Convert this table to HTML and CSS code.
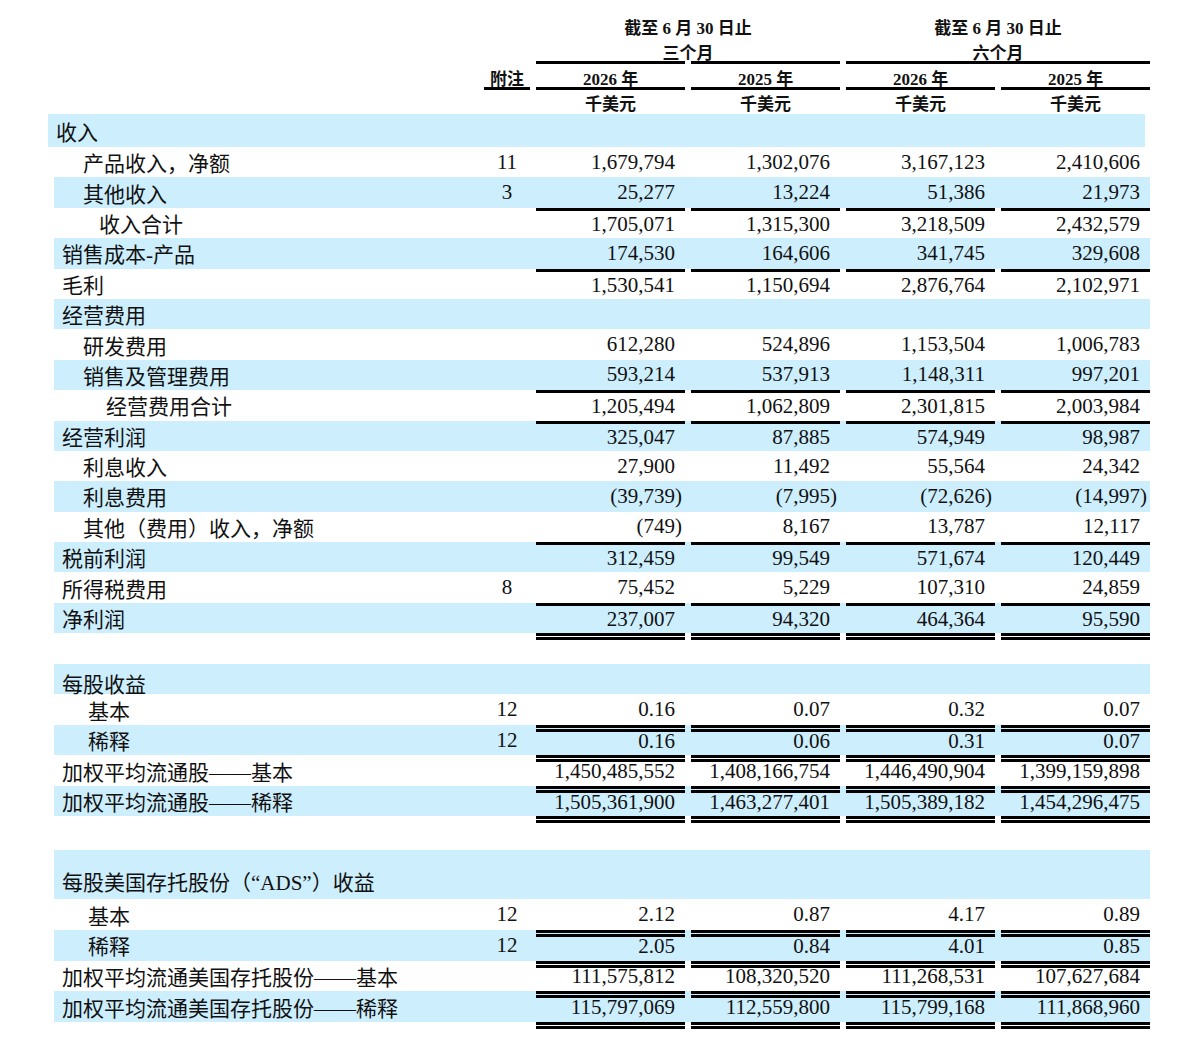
FILE: index.html
```html
<!DOCTYPE html>
<html lang="zh-CN">
<head>
<meta charset="utf-8">
<title>综合经营报表</title>
<link rel="stylesheet" href="styles.css">
</head>
<body>
<div class="sheet">
  <div class="grid hA">
    <div class="g1">截至 6 月 30 日止</div>
    <div class="g2">截至 6 月 30 日止</div>
  </div>
  <div class="grid hB">
    <div class="seg s1"></div>
    <div class="seg s2"></div>
    <div class="g1">三个月</div>
    <div class="g2">六个月</div>
  </div>
  <div class="grid hC">
    <div class="hnote"><span>附注</span></div>
    <div class="yr c1">2026 年</div>
    <div class="yr c2">2025 年</div>
    <div class="yr c3">2026 年</div>
    <div class="yr c4">2025 年</div>
  </div>
  <div class="grid hD">
    <div class="cur c1">千美元</div>
    <div class="cur c2">千美元</div>
    <div class="cur c3">千美元</div>
    <div class="cur c4">千美元</div>
  </div>

  <section class="sec s1sec">
    <div class="grid row band first"><div class="lbl">收入</div></div>
    <div class="grid row"><div class="lbl l1">产品收入，净额</div><div class="note">11</div><div class="n c1">1,679,794</div><div class="n c2">1,302,076</div><div class="n c3">3,167,123</div><div class="n c4">2,410,606</div></div>
    <div class="grid row band"><div class="lbl l1">其他收入</div><div class="note">3</div><div class="n c1">25,277</div><div class="n c2">13,224</div><div class="n c3">51,386</div><div class="n c4">21,973</div></div>
    <div class="grid row"><div class="lbl l2">收入合计</div><div class="note"></div><div class="n c1 t">1,705,071</div><div class="n c2 t">1,315,300</div><div class="n c3 t">3,218,509</div><div class="n c4 t">2,432,579</div></div>
    <div class="grid row band"><div class="lbl">销售成本-产品</div><div class="note"></div><div class="n c1">174,530</div><div class="n c2">164,606</div><div class="n c3">341,745</div><div class="n c4">329,608</div></div>
    <div class="grid row"><div class="lbl">毛利</div><div class="note"></div><div class="n c1 t">1,530,541</div><div class="n c2 t">1,150,694</div><div class="n c3 t">2,876,764</div><div class="n c4 t">2,102,971</div></div>
    <div class="grid row band"><div class="lbl">经营费用</div></div>
    <div class="grid row"><div class="lbl l1">研发费用</div><div class="note"></div><div class="n c1">612,280</div><div class="n c2">524,896</div><div class="n c3">1,153,504</div><div class="n c4">1,006,783</div></div>
    <div class="grid row band"><div class="lbl l1">销售及管理费用</div><div class="note"></div><div class="n c1">593,214</div><div class="n c2">537,913</div><div class="n c3">1,148,311</div><div class="n c4">997,201</div></div>
    <div class="grid row"><div class="lbl l2b">经营费用合计</div><div class="note"></div><div class="n c1 t">1,205,494</div><div class="n c2 t">1,062,809</div><div class="n c3 t">2,301,815</div><div class="n c4 t">2,003,984</div></div>
    <div class="grid row band"><div class="lbl">经营利润</div><div class="note"></div><div class="n c1 t">325,047</div><div class="n c2 t">87,885</div><div class="n c3 t">574,949</div><div class="n c4 t">98,987</div></div>
    <div class="grid row"><div class="lbl l1">利息收入</div><div class="note"></div><div class="n c1">27,900</div><div class="n c2">11,492</div><div class="n c3">55,564</div><div class="n c4">24,342</div></div>
    <div class="grid row band"><div class="lbl l1">利息费用</div><div class="note"></div><div class="n c1">(39,739<span class="rp">)</span></div><div class="n c2">(7,995<span class="rp">)</span></div><div class="n c3">(72,626<span class="rp">)</span></div><div class="n c4">(14,997<span class="rp">)</span></div></div>
    <div class="grid row"><div class="lbl l1">其他（费用）收入，净额</div><div class="note"></div><div class="n c1">(749<span class="rp">)</span></div><div class="n c2">8,167</div><div class="n c3">13,787</div><div class="n c4">12,117</div></div>
    <div class="grid row band"><div class="lbl">税前利润</div><div class="note"></div><div class="n c1 t">312,459</div><div class="n c2 t">99,549</div><div class="n c3 t">571,674</div><div class="n c4 t">120,449</div></div>
    <div class="grid row"><div class="lbl">所得税费用</div><div class="note">8</div><div class="n c1">75,452</div><div class="n c2">5,229</div><div class="n c3">107,310</div><div class="n c4">24,859</div></div>
    <div class="grid row band"><div class="lbl">净利润</div><div class="note"></div><div class="n c1 t">237,007</div><div class="n c2 t">94,320</div><div class="n c3 t">464,364</div><div class="n c4 t">95,590</div></div>
    <div class="grid rule"><div></div><div></div><div class="n c1 d"></div><div class="n c2 d"></div><div class="n c3 d"></div><div class="n c4 d"></div></div>
  </section>

  <section class="sec eps">
    <div class="grid row band"><div class="lbl low">每股收益</div></div>
    <div class="grid row"><div class="lbl l1e">基本</div><div class="note">12</div><div class="n c1">0.16</div><div class="n c2">0.07</div><div class="n c3">0.32</div><div class="n c4">0.07</div></div>
    <div class="grid row band"><div class="lbl l1e">稀释</div><div class="note">12</div><div class="n c1 d">0.16</div><div class="n c2 d">0.06</div><div class="n c3 d">0.31</div><div class="n c4 d">0.07</div></div>
    <div class="grid row"><div class="lbl">加权平均流通股——基本</div><div class="note"></div><div class="n c1 d">1,450,485,552</div><div class="n c2 d">1,408,166,754</div><div class="n c3 d">1,446,490,904</div><div class="n c4 d">1,399,159,898</div></div>
    <div class="grid row band"><div class="lbl">加权平均流通股——稀释</div><div class="note"></div><div class="n c1 d">1,505,361,900</div><div class="n c2 d">1,463,277,401</div><div class="n c3 d">1,505,389,182</div><div class="n c4 d">1,454,296,475</div></div>
    <div class="grid rule"><div></div><div></div><div class="n c1 d"></div><div class="n c2 d"></div><div class="n c3 d"></div><div class="n c4 d"></div></div>
  </section>

  <section class="sec ads">
    <div class="grid row band tall"><div class="lbl bottom">每股美国存托股份（“ADS”）收益</div></div>
    <div class="grid row"><div class="lbl l1e">基本</div><div class="note">12</div><div class="n c1">2.12</div><div class="n c2">0.87</div><div class="n c3">4.17</div><div class="n c4">0.89</div></div>
    <div class="grid row band"><div class="lbl l1e">稀释</div><div class="note">12</div><div class="n c1 d">2.05</div><div class="n c2 d">0.84</div><div class="n c3 d">4.01</div><div class="n c4 d">0.85</div></div>
    <div class="grid row"><div class="lbl">加权平均流通美国存托股份——基本</div><div class="note"></div><div class="n c1 d">111,575,812</div><div class="n c2 d">108,320,520</div><div class="n c3 d">111,268,531</div><div class="n c4 d">107,627,684</div></div>
    <div class="grid row band"><div class="lbl">加权平均流通美国存托股份——稀释</div><div class="note"></div><div class="n c1 d">115,797,069</div><div class="n c2 d">112,559,800</div><div class="n c3 d">115,799,168</div><div class="n c4 d">111,868,960</div></div>
    <div class="grid rule"><div></div><div></div><div class="n c1 d"></div><div class="n c2 d"></div><div class="n c3 d"></div><div class="n c4 d"></div></div>
  </section>
</div>
</body>
</html>
```

FILE: styles.css
```css
html, body {
  margin: 0;
  padding: 0;
  background: #ffffff;
  color: #111111;
}

.sheet {
  width: 1096px;
  margin-left: 54px;
}

.grid {
  display: grid;
  grid-template-columns: 432px 42px 160px 155px 155px 152px;
}

/* column margins for numeric cells / rules */
.c1 { grid-column: 3; margin-left: 8px; margin-right: 3px; }
.c2 { grid-column: 4; margin-left: 3px; margin-right: 3px; }
.c3 { grid-column: 5; margin-left: 3px; margin-right: 3px; }
.c4 { grid-column: 6; margin-left: 3px; margin-right: 0; }

/* ---------- header ---------- */
.hA, .hB, .hC, .hD {
  font-family: "Liberation Serif", "Noto Sans CJK SC", serif;
  font-weight: 700;
  font-size: 17px;
  line-height: 14px;
  box-sizing: border-box;
}

.hA {
  height: 40px;
  padding-top: 22px;
}
.hA .g1 {
  grid-column: 3 / 5;
  padding-left: 8px;
  padding-right: 3px;
  text-align: center;
}
.hA .g2 {
  grid-column: 5 / 7;
  padding-left: 3px;
  text-align: center;
}

.hB {
  height: 24px;
}
.hB .seg {
  grid-row: 1;
  border-bottom: 3px solid #000;
}
.hB .s1 { grid-column: 3; margin-left: 8px; margin-right: 3px; }
.hB .s2 { grid-column: 4; margin-left: 3px; margin-right: 3px; }
.hB .g1 {
  grid-column: 3 / 5;
  grid-row: 1;
  padding: 7px 3px 0 8px;
  text-align: center;
}
.hB .g2 {
  grid-column: 5 / 7;
  grid-row: 1;
  margin-left: 3px;
  padding-top: 7px;
  text-align: center;
  border-bottom: 3px solid #000;
}

.hC {
  height: 26px;
}
.hC .hnote {
  grid-column: 2;
  display: flex;
  justify-content: center;
}
.hC .hnote span {
  display: block;
  margin: 0 -2px;
  padding: 9px 6px 0;
  border-bottom: 3px solid #000;
}
.hC .yr {
  padding-top: 9px;
  text-align: center;
  border-bottom: 3px solid #000;
}

.hD {
  height: 24px;
}
.hD .cur {
  padding-top: 8px;
  text-align: center;
}

/* ---------- body rows ---------- */
.row {
  height: 30.4px;
  box-sizing: border-box;
  font-size: 21px;
}
.eps .row { height: 30.5px; }
.ads .row { height: 30.7px; }

.row > div {
  display: flex;
  align-items: center;
  box-sizing: border-box;
  min-width: 0;
}

.band {
  background: #cdeefd;
}

.row.first {
  height: 33px;
  margin-left: -6px;
  margin-right: 5px;
}

.eps .row.band:first-child {
  height: 30px;
}

.ads .row.tall {
  height: 49px;
}

.lbl {
  grid-column: 1;
  font-family: "Liberation Serif", "Noto Sans CJK SC", serif;
  padding-left: 8px;
  white-space: nowrap;
}
.l1 { padding-left: 29px; }
.l1e { padding-left: 34px; }
.l2 { padding-left: 45px; }
.l2b { padding-left: 52px; }
.lbl.low { padding-top: 4px; }
.lbl.bottom {
  align-items: flex-end !important;
  padding-bottom: 3px;
}

.note {
  grid-column: 2;
  justify-content: center;
  font-family: "Liberation Serif", serif;
}

.n {
  justify-content: flex-end;
  padding-right: 10px;
  font-family: "Liberation Serif", serif;
  white-space: nowrap;
}

.rp {
  margin-right: -7px;
}

.t { border-top: 3px solid #000; }

/* double rule: 3px line, 1px gap, 3px line */
.d {
  padding-top: 2px;
  background-image: linear-gradient(to bottom,
    #000 0, #000 3px,
    transparent 3px, transparent 4px,
    #000 4px, #000 7px,
    transparent 7px);
  background-repeat: no-repeat;
  background-size: 100% 7px;
  background-position: 0 0;
}

.rule {
  height: 7px;
}
.rule .d {
  padding-top: 0;
}

.s1sec { margin-bottom: 24px; }
.eps { margin-bottom: 27px; }
```
